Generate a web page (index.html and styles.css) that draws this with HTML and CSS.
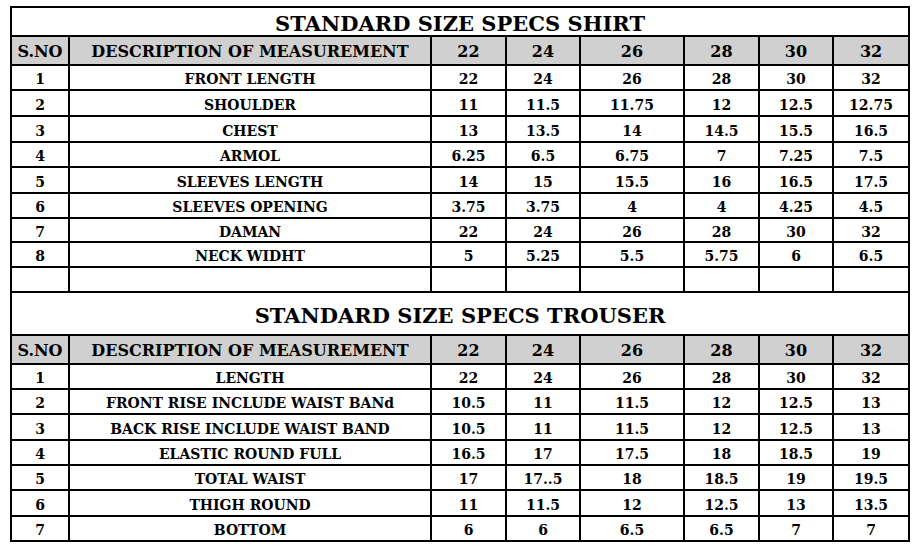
FILE: index.html
```html
<!DOCTYPE html>
<html>
<head>
<meta charset="utf-8">
<link rel="stylesheet" href="styles.css">
</head>
<body>
<table class="specs">
  <colgroup>
    <col class="c-no"><col class="c-desc"><col class="c-a"><col class="c-b"><col class="c-c"><col class="c-d"><col class="c-e"><col class="c-f">
  </colgroup>
  <tbody>
    <tr class="title"><td colspan="8">STANDARD SIZE SPECS SHIRT</td></tr>
    <tr class="head"><td>S.NO</td><td>DESCRIPTION OF MEASUREMENT</td><td>22</td><td>24</td><td>26</td><td>28</td><td>30</td><td>32</td></tr>
    <tr class="row"><td>1</td><td>FRONT LENGTH</td><td>22</td><td>24</td><td>26</td><td>28</td><td>30</td><td>32</td></tr>
    <tr class="row r26"><td>2</td><td>SHOULDER</td><td>11</td><td>11.5</td><td>11.75</td><td>12</td><td>12.5</td><td>12.75</td></tr>
    <tr class="row r26"><td>3</td><td>CHEST</td><td>13</td><td>13.5</td><td>14</td><td>14.5</td><td>15.5</td><td>16.5</td></tr>
    <tr class="row"><td>4</td><td>ARMOL</td><td>6.25</td><td>6.5</td><td>6.75</td><td>7</td><td>7.25</td><td>7.5</td></tr>
    <tr class="row r26"><td>5</td><td>SLEEVES LENGTH</td><td>14</td><td>15</td><td>15.5</td><td>16</td><td>16.5</td><td>17.5</td></tr>
    <tr class="row"><td>6</td><td>SLEEVES OPENING</td><td>3.75</td><td>3.75</td><td>4</td><td>4</td><td>4.25</td><td>4.5</td></tr>
    <tr class="row r24"><td>7</td><td>DAMAN</td><td>22</td><td>24</td><td>26</td><td>28</td><td>30</td><td>32</td></tr>
    <tr class="row"><td>8</td><td>NECK WIDHT</td><td>5</td><td>5.25</td><td>5.5</td><td>5.75</td><td>6</td><td>6.5</td></tr>
    <tr class="row"><td></td><td></td><td></td><td></td><td></td><td></td><td></td><td></td></tr>
    <tr class="title tall"><td colspan="8">STANDARD SIZE SPECS TROUSER</td></tr>
    <tr class="head"><td>S.NO</td><td>DESCRIPTION OF MEASUREMENT</td><td>22</td><td>24</td><td>26</td><td>28</td><td>30</td><td>32</td></tr>
    <tr class="row"><td>1</td><td>LENGTH</td><td>22</td><td>24</td><td>26</td><td>28</td><td>30</td><td>32</td></tr>
    <tr class="row"><td>2</td><td>FRONT RISE INCLUDE WAIST BANd</td><td>10.5</td><td>11</td><td>11.5</td><td>12</td><td>12.5</td><td>13</td></tr>
    <tr class="row r26"><td>3</td><td>BACK RISE INCLUDE WAIST BAND</td><td>10.5</td><td>11</td><td>11.5</td><td>12</td><td>12.5</td><td>13</td></tr>
    <tr class="row"><td>4</td><td>ELASTIC ROUND FULL</td><td>16.5</td><td>17</td><td>17.5</td><td>18</td><td>18.5</td><td>19</td></tr>
    <tr class="row"><td>5</td><td>TOTAL WAIST</td><td>17</td><td>17..5</td><td>18</td><td>18.5</td><td>19</td><td>19.5</td></tr>
    <tr class="row r26"><td>6</td><td>THIGH ROUND</td><td>11</td><td>11.5</td><td>12</td><td>12.5</td><td>13</td><td>13.5</td></tr>
    <tr class="row"><td>7</td><td>BOTTOM</td><td>6</td><td>6</td><td>6.5</td><td>6.5</td><td>7</td><td>7</td></tr>
  </tbody>
</table>
</body>
</html>
```
FILE: styles.css
```css
html, body {
  margin: 0;
  padding: 0;
  background: #ffffff;
}
body {
  padding: 6px 0 0 10px;
  font-family: "DejaVu Serif", "Liberation Serif", serif;
  font-weight: bold;
  color: #000;
}
.specs {
  border-collapse: collapse;
  table-layout: fixed;
  width: 900px;
}
.c-no { width: 58px; }
.c-desc { width: 362px; }
.c-a { width: 75px; }
.c-b { width: 74px; }
.c-c { width: 104px; }
.c-d { width: 75px; }
.c-e { width: 74px; }
.c-f { width: 76px; }
.specs td {
  border: 2px solid #000;
  padding: 3px 0 0 0;
  text-align: center;
  vertical-align: middle;
  white-space: nowrap;
  overflow: hidden;
  line-height: 1;
}
.title td {
  height: 24px;
  font-size: 21px;
}
.title.tall td {
  height: 38px;
}
.head td {
  height: 24px;
  background: #d0d0d0;
  font-size: 16px;
}
.row td {
  height: 20px;
  font-size: 14px;
}
.row.r26 td { height: 21px; }
.row.r24 td { height: 19px; }
```
